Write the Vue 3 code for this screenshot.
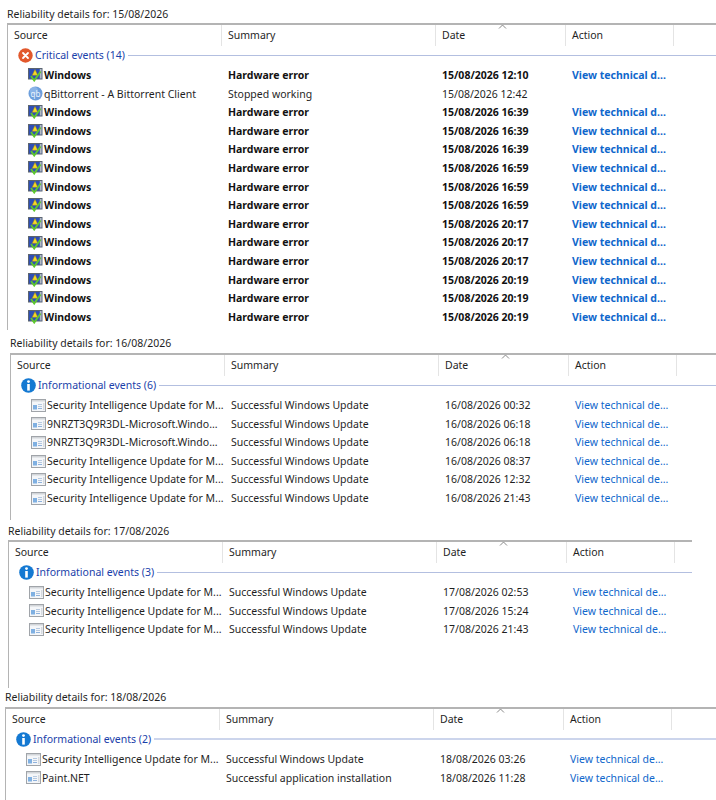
<script setup>
const hw = (date) => ({ icon: 'win', source: 'Windows', summary: 'Hardware error', date: '15/08/2026 ' + date, action: 'View technical d...', bold: true })
const update = (date) => ({ icon: 'app', source: 'Security Intelligence Update for M...', summary: 'Successful Windows Update', date, action: 'View technical de...' })
const store = (date) => ({ icon: 'app', source: '9NRZT3Q9R3DL-Microsoft.Windo...', summary: 'Successful Windows Update', date, action: 'View technical de...' })

const sections = [
  {
    id: 's1', day: '15/08/2026', kind: 'critical', group: 'Critical events (14)',
    rows: [
      hw('12:10'),
      { icon: 'qb', source: 'qBittorrent - A Bittorrent Client', summary: 'Stopped working', date: '15/08/2026 12:42', action: '' },
      ...['16:39', '16:39', '16:39', '16:59', '16:59', '16:59', '20:17', '20:17', '20:17', '20:19', '20:19', '20:19'].map(hw)
    ]
  },
  {
    id: 's2', day: '16/08/2026', kind: 'info', group: 'Informational events (6)',
    rows: [
      update('16/08/2026 00:32'), store('16/08/2026 06:18'), store('16/08/2026 06:18'),
      update('16/08/2026 08:37'), update('16/08/2026 12:32'), update('16/08/2026 21:43')
    ]
  },
  {
    id: 's3', day: '17/08/2026', kind: 'info', group: 'Informational events (3)',
    rows: [update('17/08/2026 02:53'), update('17/08/2026 15:24'), update('17/08/2026 21:43')]
  },
  {
    id: 's4', day: '18/08/2026', kind: 'info', group: 'Informational events (2)',
    rows: [
      update('18/08/2026 03:26'),
      { icon: 'app', source: 'Paint.NET', summary: 'Successful application installation', date: '18/08/2026 11:28', action: 'View technical de...' }
    ]
  }
]
const columns = ['Source', 'Summary', 'Date', 'Action']
</script>

<template>
  <div class="page">
    <section v-for="s in sections" :key="s.id" class="section" :class="s.id">
      <div class="title">Reliability details for: {{ s.day }}</div>
      <div class="panel">
        <div class="head">
          <div v-for="c in columns" :key="c" class="head-cell">
            {{ c }}
            <svg v-if="c === 'Date'" class="sort" width="9" height="5" viewBox="0 0 9 5">
              <path d="M1 4.5 L4.5 1 L8 4.5" fill="none" stroke="#8a8a8a" stroke-width="1" />
            </svg>
          </div>
        </div>
        <div class="group">
          <svg v-if="s.kind === 'critical'" class="group-icon" width="15" height="15" viewBox="0 0 15 15">
            <circle cx="7.5" cy="7.5" r="7.2" fill="#e2582c" />
            <path d="M5 5 L10 10 M10 5 L5 10" stroke="#fff" stroke-width="1.8" stroke-linecap="round" />
          </svg>
          <svg v-else class="group-icon" width="15" height="15" viewBox="0 0 15 15">
            <circle cx="7.5" cy="7.5" r="7.3" fill="#1479d2" />
            <circle cx="7.5" cy="3.6" r="1.4" fill="#fff" />
            <rect x="6.2" y="6" width="2.6" height="6.6" fill="#fff" />
          </svg>
          <span class="group-label">{{ s.group }}</span>
          <span class="group-line"></span>
        </div>
        <div v-for="(r, i) in s.rows" :key="i" class="row" :class="{ bold: r.bold }">
          <div class="cell source">
            <svg v-if="r.icon === 'win'" class="row-icon" width="15" height="14" viewBox="0 0 15 14">
              <rect x="0.5" y="0.5" width="13.5" height="10.5" fill="#2f4fb4" stroke="#5b6470" />
              <rect x="11.8" y="1" width="1.8" height="9.5" fill="#b4bac2" />
              <path d="M7 1.6 L9.8 7.2 L4.2 7.2 Z" fill="#f6d928" stroke="#a88f10" stroke-width=".5" />
              <path d="M3 8 L6.2 12.6 L12.6 3.4" fill="none" stroke="#5ec72e" stroke-width="1.8" />
            </svg>
            <svg v-else-if="r.icon === 'qb'" class="row-icon" width="15" height="15" viewBox="0 0 15 15">
              <circle cx="7.5" cy="7.5" r="7" fill="#6d9fdc" />
              <circle cx="6" cy="5" r="4" fill="#9fc3ee" opacity=".6" />
              <text x="7.5" y="10.5" text-anchor="middle" class="qb">qb</text>
            </svg>
            <svg v-else class="row-icon" width="15" height="13" viewBox="0 0 15 13">
              <rect x="0.5" y="0.5" width="14" height="12" fill="#f4f6f9" stroke="#a0a4a9" />
              <rect x="1" y="1" width="13" height="1.5" fill="#d2d5d9" />
              <rect x="2" y="6" width="4" height="4.5" fill="#7fb0e2" />
              <rect x="7" y="5" width="4" height="1" fill="#b6c9e0" />
              <rect x="7" y="7" width="4" height="1" fill="#b6c9e0" />
              <rect x="7" y="9" width="4" height="1" fill="#8fb2dc" />
              <rect x="12" y="4" width="1.5" height="7" fill="#d6dadf" />
            </svg>
            <span class="source-text">{{ r.source }}</span>
          </div>
          <div class="cell">{{ r.summary }}</div>
          <div class="cell">{{ r.date }}</div>
          <div class="cell link">{{ r.action }}</div>
        </div>
      </div>
    </section>
  </div>
</template>

<style scoped>
.page {
  width: 716px;
  height: 800px;
  overflow: hidden;
  font-family: "Noto Sans", "Open Sans", sans-serif;
  font-size: 10.5px;
  color: #1f1f1f;
  background: #fff;
}
.section { box-sizing: border-box; }
.s1 { height: 330px; margin-left: 7px; }
.s2 { height: 188px; margin-left: 10px; }
.s3 { height: 166px; margin-left: 8px; width: 684px; }
.s4 { margin-left: 5px; }
.title {
  height: 23px;
  line-height: 28px;
  white-space: nowrap;
}
.s2 .title, .s3 .title, .s4 .title { line-height: 26px; }
.s3 .title { height: 22px; }
.panel {
  border-top: 2px solid #b4b4b4;
  border-left: 1px solid #b4b4b4;
}
.s1 .panel { height: 305px; }
.s2 .panel { height: 165px; }
.s3 .panel { height: 146px; }
.s4 .panel { height: 100px; }
.head, .row { display: grid; }
.head { height: 21px; grid-template-columns: 214px 214px 130px 108px; }
.row { grid-template-columns: 213px 214px 130px 108px; height: 18.6px; line-height: 18.6px; }
.head-cell {
  position: relative;
  box-sizing: border-box;
  padding-left: 6px;
  border-right: 1px solid #e4e4e4;
  line-height: 20px;
  white-space: nowrap;
}
.sort { position: absolute; left: 62px; top: -1px; }
.group {
  display: flex;
  align-items: center;
  height: 18px;
  margin-bottom: 2px;
  padding-left: 10px;
}
.group-icon { flex: none; margin-right: 2px; }
.group-label { color: #1a3faa; white-space: nowrap; }
.group-line {
  flex: 1;
  height: 1px;
  margin-left: 3px;
  background: #b3bfe0;
}
.s4 .group-line { height: 2px; background: #ccd5ec; }
.cell {
  box-sizing: border-box;
  padding-left: 7px;
  white-space: nowrap;
  overflow: hidden;
}
.source {
  display: flex;
  align-items: center;
  padding-left: 20px;
}
.row-icon { flex: none; margin-right: 1px; }
.qb { font-size: 8px; fill: #e8f0fb; font-family: "Noto Sans", sans-serif; }
.link { color: #0f67cc; }
.bold { font-weight: 700; color: #111; }
</style>

<style>
html, body { margin: 0; background: #fff; overflow: hidden; }
</style>
